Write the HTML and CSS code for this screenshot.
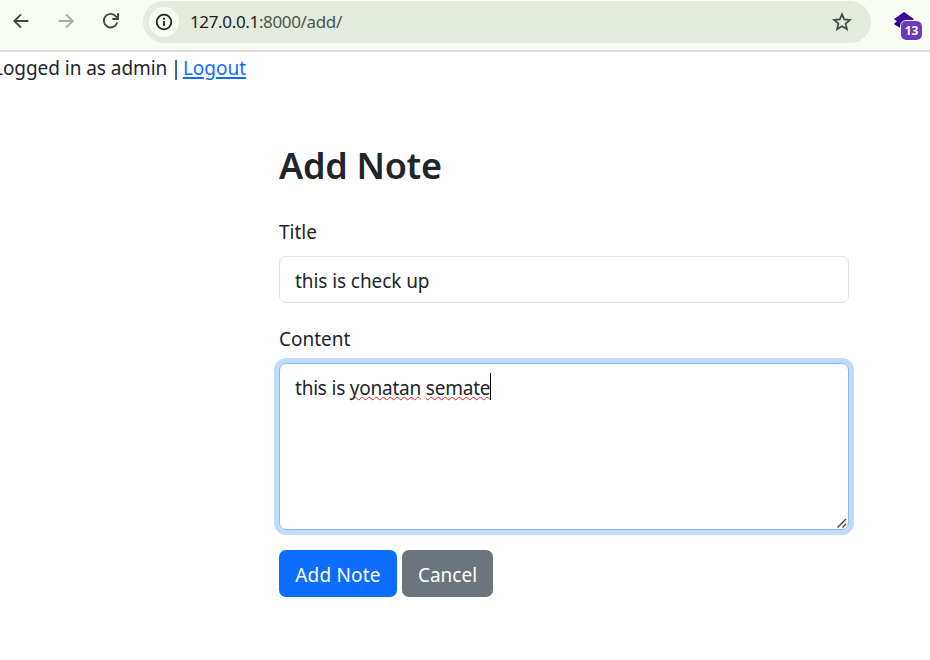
FILE: index.html
```html
<!DOCTYPE html>
<html lang="en">
<head>
<meta charset="utf-8">
<title>Add Note</title>
<link rel="stylesheet" href="styles.css">
</head>
<body>
<header class="toolbar">
  <nav class="nav">
    <svg width="18" height="18" viewBox="0 0 18 18"><path d="M16.4 9H2.6M9 2.3 2.3 9 9 15.7"/></svg>
    <svg class="off" width="18" height="18" viewBox="0 0 18 18"><path d="M1.6 9h13.8M9 2.3 15.7 9 9 15.7"/></svg>
    <svg width="18" height="18" viewBox="0 0 18 18"><path d="M15.2 10.6A6.8 6.8 0 1 1 14.2 4.7L15.6 6.5M16 1.3V7H10.3"/></svg>
  </nav>
  <div class="omnibox">
    <span class="info"><svg width="18" height="18" viewBox="0 0 18 18"><circle cx="9" cy="9" r="7.3"/><path d="M9 8v5M9 4.8v2"/></svg></span>
    <span class="url">127.0.0.1<span class="path">:8000/add/</span></span>
    <svg class="star" width="20" height="20" viewBox="0 0 20 20"><path d="M10 2.2l2.2 5.200 5.800.5-4.400 3.700 1.350 5.600-4.950-3L5.050 17.200l1.350-5.600L2 7.900l5.800-.5z"/></svg>
  </div>
  <div class="extension">
    <svg width="22" height="22" viewBox="0 0 22 22"><path fill="#3f079f" d="M11 0l10 7-3 2 3 3-10 6-10-6 3-2.500L1 7z"/><path fill="#250068" d="M1 12l3-2.500 7 4.500v4z"/></svg>
    <span class="badge">13</span>
  </div>
</header>
<div class="session"><span class="user">Logged in as admin</span><span class="bar"> | </span><a href="#">Logout</a></div>
<main class="container">
  <h2>Add Note</h2>
  <form>
    <label>Title</label>
    <div class="control"><span class="v-title">this is check up</span></div>
    <label>Content</label>
    <div class="control area"><span class="v-content">this is <span class="typo">yonatan</span> <span class="typo">semate</span></span><i class="caret"></i>
      <svg class="grip" width="12" height="12" viewBox="0 0 12 12"><path d="M1.500 10.500 10 2M6.500 10.500 10 7"/></svg>
    </div>
    <div class="actions"><span class="btn primary">Add Note</span><span class="btn secondary">Cancel</span></div>
  </form>
</main>
</body>
</html>
```
FILE: styles.css
```css
* { box-sizing: border-box; }
body {
  margin: 0;
  height: 660px;
  overflow: hidden;
  background: #fff;
  color: #212529;
  font: 19px/30px "Noto Sans", sans-serif;
  white-space: nowrap;
}
svg { display: block; flex: none; fill: none; stroke: #3c4a3f; stroke-width: 1.9; }
.toolbar {
  display: flex;
  height: 52px;
  padding-top: 1px;
  background: #f8fcf3;
  border-bottom: 2px solid #dde0da;
}
.nav { display: flex; gap: 27px; width: 143px; padding: 11px 0 0 12px; }
.off { stroke: #a5aaa2; }
.omnibox {
  display: flex;
  align-items: center;
  width: 728px;
  height: 42px;
  padding: 0 19px 0 6px;
  border-radius: 21px;
  background: #e3ebdf;
}
.info {
  display: flex;
  align-items: center;
  justify-content: center;
  width: 30px;
  height: 30px;
  border-radius: 50%;
  background: #f8fcf3;
}
.info svg { stroke: #20251f; stroke-width: 1.8; }
.url { margin-left: 11px; font-size: 17px; letter-spacing: -.35px; color: #1c211b; }
.path { color: #4b554b; }
.star { margin-left: auto; stroke-width: 1.7; }
.extension { position: relative; margin: 11px 0 0 22px; width: 30px; height: 30px; }
.extension svg { stroke: none; }
.badge {
  position: absolute;
  left: 8px;
  top: 9px;
  width: 21px;
  height: 19px;
  border-radius: 5px;
  background: #6b3abf;
  outline: 1px solid #f8fcf3;
  color: #fff;
  font: bold 12px/20px "Noto Sans", sans-serif;
  text-align: center;
}
.session { height: 30px; margin-left: -7px; padding-top: 1px; }
a { color: #0d6efd; text-decoration: underline; text-decoration-thickness: 1.5px; text-underline-offset: 2px; }
.user { letter-spacing: -.05px; }
.bar { white-space: pre; letter-spacing: -1.6px; margin-right: 0; }
.container { width: 570px; margin: 60px 0 0 279px; }
h2 { margin: 0 0 27px; font-size: 36px; line-height: 48px; font-weight: 600; letter-spacing: -.3px; }
label { display: block; height: 30px; margin-bottom: 9px; }
.control {
  height: 47px;
  margin-bottom: 21px;
  padding: 9px 15px;
  border: 1px solid #dee2e6;
  border-radius: 7px;
}
.v-title { letter-spacing: -.08px; }
.area {
  position: relative;
  display: flex;
  height: 167px;
  margin-bottom: 20px;
  border-color: #86b7fe;
  box-shadow: 0 0 0 5px #c2daff;
}
.v-content { white-space: pre; height: 30px; letter-spacing: -.22px; }
.typo { text-decoration: underline wavy #e0242b 1.3px; text-decoration-skip-ink: none; text-underline-offset: 1px; }
.caret { width: 1px; height: 27px; background: #000; }
.grip { position: absolute; right: 0; bottom: 0; stroke: #444; stroke-width: 1.4; }
.actions { display: flex; gap: 5px; }
.btn { height: 47px; padding-top: 10px; border-radius: 7px; color: #fff; text-align: center; }
.primary { width: 118px; background: #0d6efd; letter-spacing: .2px; }
.secondary { width: 91px; background: #6c757d; }
```
